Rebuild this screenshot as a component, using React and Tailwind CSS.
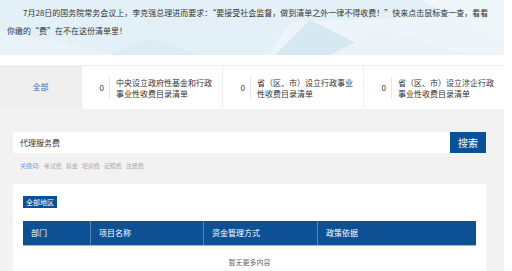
import React from 'react';

const tabs = [
  { count: 0, lines: ['中央设立政府性基金和行政', '事业性收费目录清单'] },
  { count: 0, lines: ['省（区、市）设立行政事业', '性收费目录清单'] },
  { count: 0, lines: ['省（区、市）设立涉企行政', '事业性收费目录清单'] },
];

const keywords = ['考试费', '基金', '培训费', '证照费', '注册费'];

const columns = [
  { name: '部门', w: 'w-[67px]' },
  { name: '项目名称', w: 'w-[113px]' },
  { name: '资金管理方式', w: 'w-[114px]' },
  { name: '政策依据', w: 'flex-1' },
];

function BannerArt() {
  return (
    <svg className="absolute inset-0 w-full h-full" viewBox="0 0 504 55" preserveAspectRatio="none">
      <rect width="504" height="55" fill="#e4f0f7" />
      <polygon points="0,30 120,55 0,55" fill="#eaf3f9" />
      <polygon points="150,38 200,55 110,55" fill="#dcebf4" />
      <polygon points="290,22 504,14 504,55 270,55" fill="#edf5fa" />
      <polygon points="310,20 380,55 275,55" fill="#d6e8f2" />
      <polygon points="420,0 504,0 504,40" fill="#eef6fa" />
      <polygon points="380,30 470,55 330,55" fill="#e9f3f8" />
    </svg>
  );
}

export default function App() {
  return (
    <div className="w-[512px] h-[271px] bg-white overflow-hidden font-['Noto_Sans_CJK_SC','Noto_Sans',sans-serif]">
      <div className="w-[504px] bg-[#f2f2f2] min-h-[271px]">
        {/* Banner */}
        <div className="relative h-[55px] overflow-hidden">
          <BannerArt />
          <p className="relative pl-[7px] pr-[12px] pt-[4px] text-[8px] leading-[18px] text-[#333] indent-[16px]">
            7月28日的国务院常务会议上，李克强总理进而要求：“要接受社会监督，做到清单之外一律不得收费！”快来点击鼠标查一查，看看你缴的“费”在不在这份清单里！
          </p>
        </div>

        {/* Tabs */}
        <div className="bg-white pt-[10px]">
          <div className="flex h-[44px]">
            <div className="w-[81px] bg-[#efefef] flex items-center justify-center text-[8px] text-[#3d6fa8]">
              全部
            </div>
            {tabs.map((t, i) => (
              <div key={i} className="w-[141px] flex items-center border-l border-t border-[#eeeeee] bg-white">
                <span className="w-[27px] text-right pr-[5px] text-[8px] text-[#333]">{t.count}</span>
                <div className="border-l border-[#e6e6e6] pl-[6px] text-[8px] leading-[11px] text-[#333]">
                  {t.lines.map((l) => (
                    <div key={l}>{l}</div>
                  ))}
                </div>
              </div>
            ))}
          </div>
        </div>

        {/* Search */}
        <div className="pt-[23px] pl-[13px] pr-[18px]">
          <div className="flex h-[21px]">
            <div className="flex-1 bg-white flex items-center pl-[7px] text-[8px] text-[#333]">代理服务费</div>
            <button className="w-[36px] bg-[#0b5196] text-white text-[10px] flex items-center justify-center">搜索</button>
          </div>
          <div className="flex items-center gap-[4px] pl-[7px] h-[24px] text-[6px] text-[#aaaaaa]">
            <span className="text-[#5b9ee0]">关键词:</span>
            {keywords.map((k) => (
              <span key={k}>{k}</span>
            ))}
          </div>
        </div>

        {/* Results */}
        <div className="ml-[13px] mr-[18px] mt-[7px] bg-white px-[10px] pt-[12px] h-[90px]">
          <div className="flex">
            <span className="bg-[#0b5196] text-white text-[7px] leading-[12px] px-[3px]">全部地区</span>
          </div>
          <div className="mt-[13px] flex h-[25px] bg-[#0d5094] border-b border-[#9dbbd9]">
            {columns.map((c, i) => (
              <div
                key={c.name}
                className={`${c.w} flex items-center pl-[8px] text-[8px] text-white ${i > 0 ? 'border-l border-[#5b84b3]' : ''}`}
              >
                {c.name}
              </div>
            ))}
          </div>
          <div className="text-center text-[7px] leading-[10px] text-[#666] pt-[11px]">暂无更多内容</div>
        </div>
      </div>
    </div>
  );
}
